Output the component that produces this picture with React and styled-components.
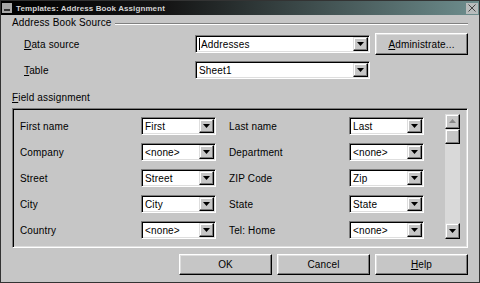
import React from "react";
import styled, { createGlobalStyle } from "styled-components";

const GlobalStyle = createGlobalStyle`
  html, body {
    margin: 0;
    padding: 0;
    background: #c6c6c6;
  }
  body {
    font-family: "Liberation Sans", Arial, sans-serif;
  }
`;

const Window = styled.div`
  width: 480px;
  height: 283px;
  box-sizing: border-box;
  background: #c6c6c6;
  border: 1px solid #333;
  display: flex;
  flex-direction: column;
  font-size: 10px;
  letter-spacing: 0.15px;
  color: #000;
  overflow: hidden;
`;

const TitleBar = styled.div`
  height: 14px;
  display: flex;
  align-items: center;
  gap: 4px;
  padding: 0 1px;
  background: linear-gradient(to right, #000 0%, #151515 35%, #6e8e8e 100%);
`;

const MenuBox = styled.div`
  width: 10px;
  height: 10px;
  background: #a8a8a8;
  position: relative;
  &::after {
    content: "";
    position: absolute;
    left: 2px;
    right: 2px;
    top: 6px;
    height: 2px;
    background: #333;
  }
`;

const Title = styled.span`
  flex: 1;
  color: #d4d4d4;
  font-family: "Liberation Sans", Arial, sans-serif;
  font-weight: bold;
  font-size: 8px;
  letter-spacing: 0.1px;
`;

const CloseBox = styled.div`
  width: 12px;
  height: 11px;
  background: #b8bcbc;
  display: flex;
  align-items: center;
  justify-content: center;
`;

const Content = styled.div`
  flex: 1;
  display: flex;
  flex-direction: column;
  padding: 1px 11px 0 11px;
`;

const SectionHead = styled.div`
  height: 13px;
  display: flex;
  align-items: center;
  gap: 3px;
  white-space: nowrap;
  &::after {
    content: "";
    flex: 1;
    margin-top: 3px;
    border-top: 1px solid #808080;
    border-bottom: 1px solid #fff;
  }
`;

const SourceGrid = styled.div`
  margin-top: 4px;
  display: grid;
  grid-template-columns: 178px 175px 93px;
  grid-template-rows: 22px 18px;
  column-gap: 5px;
  row-gap: 6px;
  align-items: center;
`;

const SourceLabel = styled.span`
  padding-left: 12px;
`;

const U = styled.span`
  text-decoration: underline;
`;

const Combo = styled.div`
  height: 18px;
  box-sizing: border-box;
  display: flex;
  align-items: center;
  background: #fff;
  border-top: 1px solid #7b7b7b;
  border-left: 1px solid #7b7b7b;
  border-bottom: 1px solid #fff;
  border-right: 1px solid #fff;
  box-shadow: inset 1px 1px 0 #000, inset -1px -1px 0 #dedede;
`;

const ComboText = styled.span`
  flex: 1;
  padding-left: 3px;
  white-space: nowrap;
  overflow: hidden;
  display: flex;
  align-items: center;
`;

const Caret = styled.span`
  display: inline-block;
  width: 1px;
  height: 12px;
  background: #000;
  margin-right: 1px;
`;

const DropBtn = styled.div`
  width: 15px;
  height: 14px;
  margin-right: 1px;
  box-sizing: border-box;
  background: #c6c6c6;
  border-top: 1px solid #dedede;
  border-left: 1px solid #dedede;
  border-right: 1px solid #000;
  border-bottom: 1px solid #000;
  box-shadow: inset -1px -1px 0 #7b7b7b, inset 1px 1px 0 #fff;
  display: flex;
  align-items: center;
  justify-content: center;
`;

const Button = styled.button`
  height: ${(p) => p.$h || "21px"};
  width: 93px;
  padding: 0;
  box-sizing: border-box;
  background: #c6c6c6;
  font-family: "Liberation Sans", Arial, sans-serif;
  font-size: 10px;
  letter-spacing: 0.15px;
  color: #000;
  border-top: 1px solid #fff;
  border-left: 1px solid #fff;
  border-right: 1px solid #000;
  border-bottom: 1px solid #000;
  box-shadow: inset -1px -1px 0 #7b7b7b, inset 1px 1px 0 #dedede;
`;

const FieldHead = styled.div`
  margin-top: 12px;
  height: 13px;
  display: flex;
  align-items: center;
`;

const GroupBox = styled.div`
  margin-top: 4px;
  height: 140px;
  box-sizing: border-box;
  display: flex;
  border-top: 1px solid #7b7b7b;
  border-left: 1px solid #7b7b7b;
  border-right: 1px solid #fff;
  border-bottom: 1px solid #fff;
  box-shadow: inset 1px 1px 0 #000, inset -1px -1px 0 #dedede;
  padding: 8px 0 0 7px;
`;

const FieldGrid = styled.div`
  display: grid;
  grid-template-columns: 121px 75px 13px 120px 75px;
  grid-auto-rows: 18px;
  row-gap: 8px;
  align-items: center;
`;

const Scrollbar = styled.div`
  margin: -3px 0 0 21px;
  width: 15px;
  height: 125px;
  display: flex;
  flex-direction: column;
  background: #d9d9d9;
`;

const ScrollBtn = styled.div`
  height: ${(p) => p.$h || "15px"};
  box-sizing: border-box;
  background: #c6c6c6;
  border-top: 1px solid #dedede;
  border-left: 1px solid #dedede;
  border-right: 1px solid #000;
  border-bottom: 1px solid #000;
  box-shadow: inset -1px -1px 0 #7b7b7b, inset 1px 1px 0 #fff;
  display: flex;
  align-items: center;
  justify-content: center;
`;

const Track = styled.div`
  flex: 1;
`;

const ButtonRow = styled.div`
  margin-top: 6px;
  display: flex;
  justify-content: flex-end;
  gap: 5px;
`;

const Down = () => (
  <svg width="7" height="5" viewBox="0 0 7 5">
    <path d="M0 0h7L3.5 4z" fill="#000" />
  </svg>
);

const Up = ({ color = "#000" }) => (
  <svg width="7" height="5" viewBox="0 0 7 5">
    <path d="M0 4h7L3.5 0z" fill={color} />
  </svg>
);

const Select = ({ value, caret }) => (
  <Combo>
    <ComboText>
      {caret && <Caret />}
      {value}
    </ComboText>
    <DropBtn>
      <Down />
    </DropBtn>
  </Combo>
);

const fields = [
  ["First name", "First", "Last name", "Last"],
  ["Company", "<none>", "Department", "<none>"],
  ["Street", "Street", "ZIP Code", "Zip"],
  ["City", "City", "State", "State"],
  ["Country", "<none>", "Tel: Home", "<none>"],
];

export default function App() {
  return (
    <>
      <GlobalStyle />
      <Window>
        <TitleBar>
          <MenuBox />
          <Title>Templates: Address Book Assignment</Title>
          <CloseBox>
            <svg width="8" height="8" viewBox="0 0 8 8">
              <path d="M0.5 0.5l7 7M7.5 0.5l-7 7" stroke="#444" strokeWidth="1" />
            </svg>
          </CloseBox>
        </TitleBar>
        <Content>
          <SectionHead>Address Book Source</SectionHead>
          <SourceGrid>
            <SourceLabel>
              <U>D</U>ata source
            </SourceLabel>
            <Select value="Addresses" caret />
            <Button $h="22px">
              <U>A</U>dministrate...
            </Button>
            <SourceLabel>
              <U>T</U>able
            </SourceLabel>
            <Select value="Sheet1" />
          </SourceGrid>
          <FieldHead>
            <span>
              <U>F</U>ield assignment
            </span>
          </FieldHead>
          <GroupBox>
            <FieldGrid>
              {fields.map(([l1, v1, l2, v2]) => (
                <React.Fragment key={l1}>
                  <span>{l1}</span>
                  <Select value={v1} />
                  <span />
                  <span>{l2}</span>
                  <Select value={v2} />
                </React.Fragment>
              ))}
            </FieldGrid>
            <Scrollbar>
              <ScrollBtn>
                <Up color="#888" />
              </ScrollBtn>
              <ScrollBtn />
              <Track />
              <ScrollBtn $h="16px">
                <Down />
              </ScrollBtn>
            </Scrollbar>
          </GroupBox>
          <ButtonRow>
            <Button>OK</Button>
            <Button>Cancel</Button>
            <Button>
              <U>H</U>elp
            </Button>
          </ButtonRow>
        </Content>
      </Window>
    </>
  );
}
